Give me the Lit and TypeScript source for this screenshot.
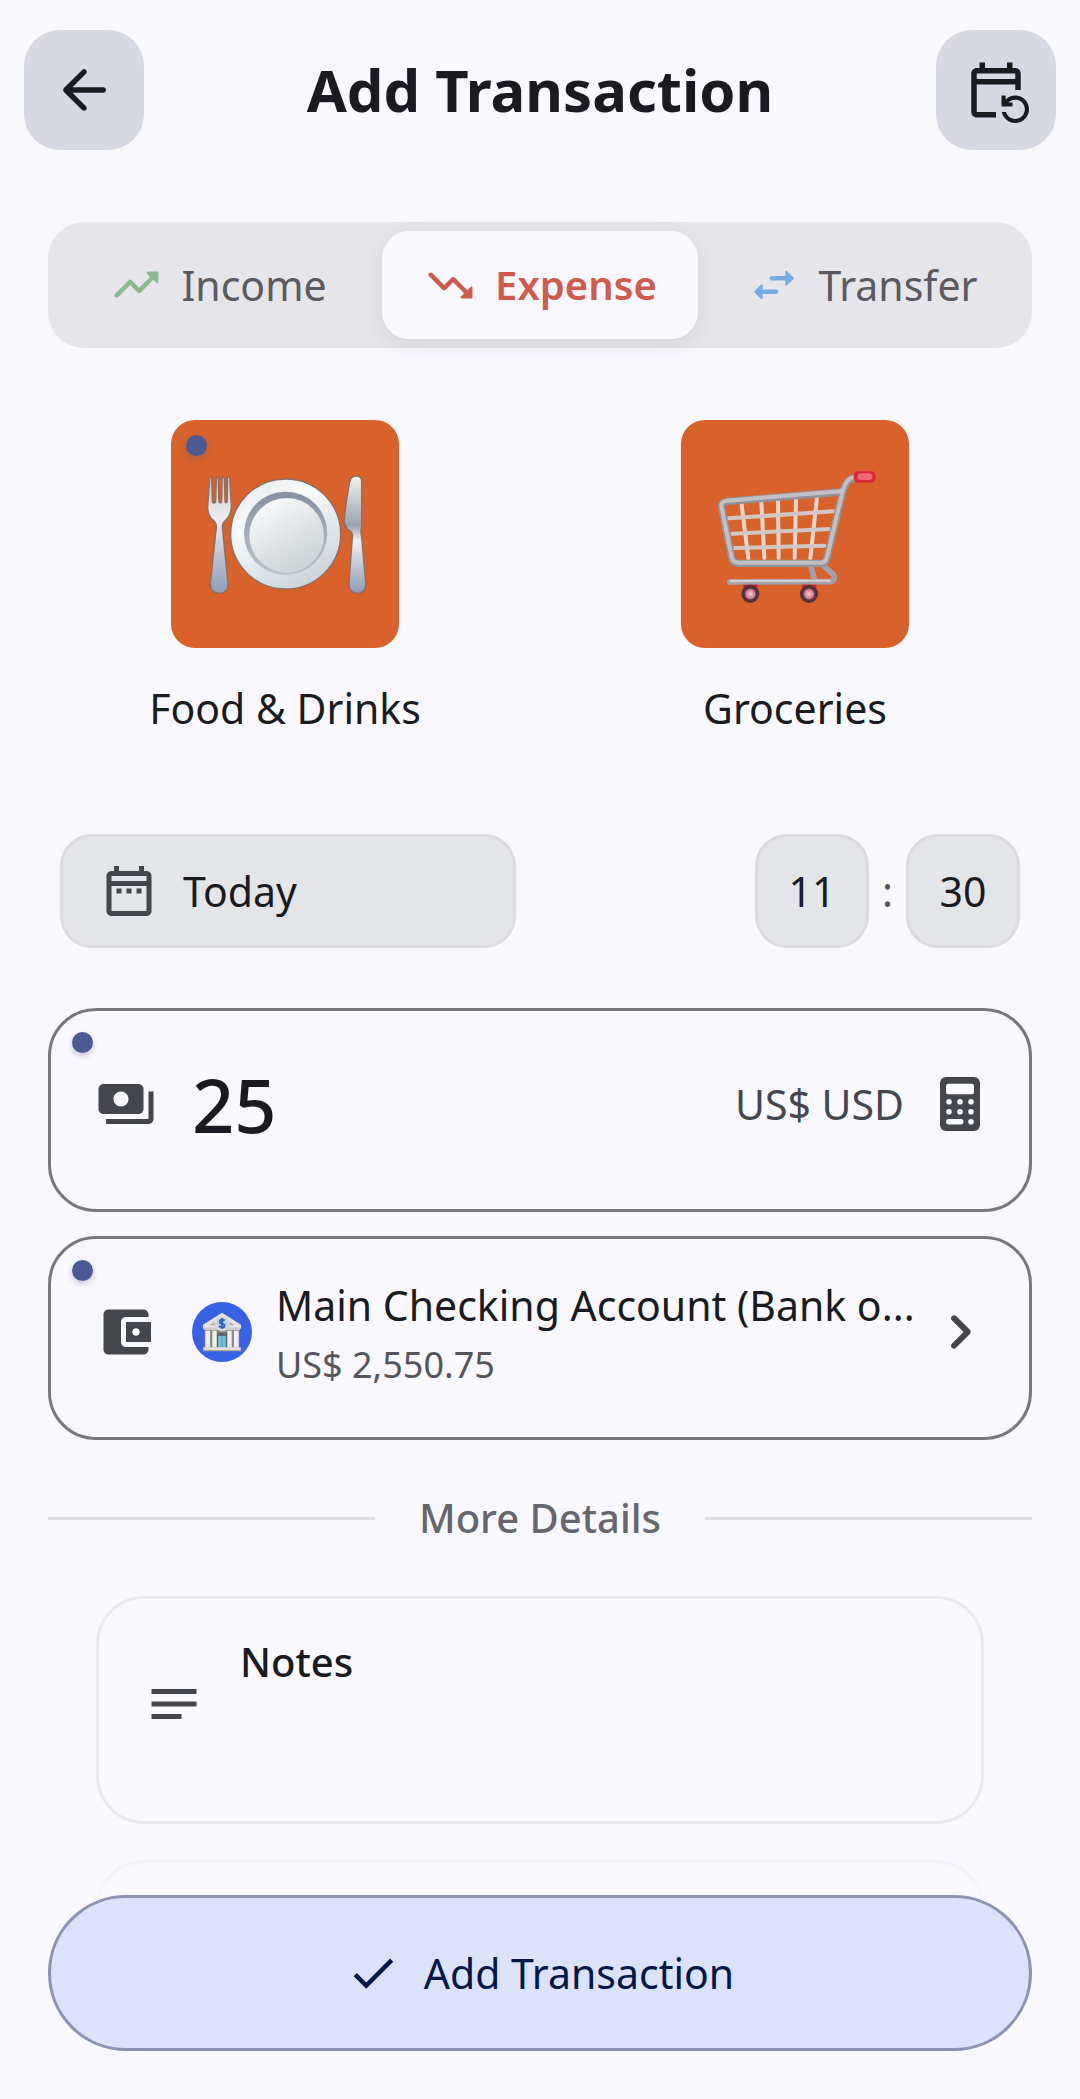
import { css, html, LitElement, svg, type TemplateResult } from 'lit'
import { customElement, property, state } from 'lit/decorators.js'
import { classMap } from 'lit/directives/class-map.js'

type TransactionKind = 'income' | 'expense' | 'transfer'

interface KindTab {
  kind: TransactionKind
  label: string
  icon: string
}

interface Category {
  id: string
  label: string
  art: () => TemplateResult
}

const ICONS: Record<string, TemplateResult> = {
  back: svg`<path d="M19 11H7.83l4.88-4.88c.39-.39.39-1.03 0-1.42-.39-.39-1.02-.39-1.41 0l-6.59 6.59c-.39.39-.39 1.02 0 1.41l6.59 6.59c.39.39 1.02.39 1.41 0 .39-.39.39-1.02 0-1.41L7.83 13H19c.55 0 1-.45 1-1s-.45-1-1-1z"/>`,
  repeat: svg`<path d="M21 12V6c0-1.1-.9-2-2-2h-1V2h-2v2H8V2H6v2H5c-1.1 0-2 .9-2 2v14c0 1.1.9 2 2 2h7v-2H5V10h14v2h2zM19 8H5V6h14v2zM15.64 20c.43 1.45 1.77 2.5 3.36 2.5 1.93 0 3.5-1.57 3.5-3.5s-1.57-3.5-3.5-3.5c-.95 0-1.82.38-2.45 1H18V18h-4v-4h1.5v1.43C16.4 14.55 17.64 14 19 14c2.76 0 5 2.24 5 5s-2.24 5-5 5c-2.42 0-4.44-1.72-4.9-4h1.54z"/>`,
  income: svg`<path d="M16.85 6.85l1.44 1.44-4.88 4.88-3.29-3.29c-.39-.39-1.02-.39-1.41 0l-6 6.01c-.39.39-.39 1.02 0 1.41.39.39 1.02.39 1.41 0L9.41 12l3.29 3.29c.39.39 1.02.39 1.41 0l5.59-5.58 1.44 1.44c.31.31.85.09.85-.35V6.5c.01-.28-.21-.5-.49-.5h-4.29c-.45 0-.67.54-.36.85z"/>`,
  expense: svg`<path transform="matrix(1 0 0 -1 0 24)" d="M16.85 6.85l1.44 1.44-4.88 4.88-3.29-3.29c-.39-.39-1.02-.39-1.41 0l-6 6.01c-.39.39-.39 1.02 0 1.41.39.39 1.02.39 1.41 0L9.41 12l3.29 3.29c.39.39 1.02.39 1.41 0l5.59-5.58 1.44 1.44c.31.31.85.09.85-.35V6.5c.01-.28-.21-.5-.49-.5h-4.29c-.45 0-.67.54-.36.85z"/>`,
  transfer: svg`<path d="M6.14 11.86l-2.78 2.79c-.19.2-.19.51 0 .71l2.78 2.79c.31.32.85.09.85-.35V16H13c.55 0 1-.45 1-1s-.45-1-1-1H7v-1.79c0-.45-.54-.67-.86-.35zm14.51-3.21l-2.78-2.79c-.31-.32-.85-.09-.85.35V8H11c-.55 0-1 .45-1 1s.45 1 1 1h6v1.79c0 .45.54.67.85.35l2.78-2.79c.2-.19.2-.51.02-.7z"/>`,
  calendar: svg`<path d="M7 11h2v2H7v-2zm14-5v14c0 1.1-.9 2-2 2H5c-1.11 0-2-.9-2-2V6c0-1.1.89-2 2-2h1V2h2v2h8V2h2v2h1c1.1 0 2 .9 2 2zM5 8h14V6H5v2zm14 12V10H5v10h14zm-4-7h2v-2h-2v2zm-4 0h2v-2h-2v2z"/>`,
  cash: svg`<path d="M19 14V6c0-1.1-.9-2-2-2H3c-1.1 0-2 .9-2 2v8c0 1.1.9 2 2 2h14c1.1 0 2-.9 2-2zm-9-1c-1.66 0-3-1.34-3-3s1.34-3 3-3 3 1.34 3 3-1.34 3-3 3zm13-6v11c0 1.1-.9 2-2 2H4v-2h17V7h2z"/>`,
  wallet: svg`<path d="M21 18v1c0 1.1-.9 2-2 2H5c-1.11 0-2-.9-2-2V5c0-1.1.89-2 2-2h14c1.1 0 2 .9 2 2v1h-9c-1.11 0-2 .9-2 2v8c0 1.1.89 2 2 2h9zm-9-2h10V8H12v8zm4-2.5c-.83 0-1.5-.67-1.5-1.5s.67-1.5 1.5-1.5 1.5.67 1.5 1.5-.67 1.5-1.5 1.5z"/>`,
  chevron: svg`<path d="M9.29 6.71c-.39.39-.39 1.02 0 1.41L13.17 12l-3.88 3.88c-.39.39-.39 1.02 0 1.41.39.39 1.02.39 1.41 0l4.59-4.59c.39-.39.39-1.02 0-1.41L10.7 6.7c-.38-.38-1.02-.38-1.41.01z"/>`,
  notes: svg`<path d="M3 18h12v-2H3v2zM3 6v2h18V6H3zm0 7h18v-2H3v2z"/>`,
  check: svg`<path d="M9 16.17L4.83 12l-1.42 1.41L9 19 21 7l-1.41-1.41z"/>`,
}

const calculatorIcon = html`
  <svg viewBox="0 0 72 72" aria-hidden="true">
    <rect x="16" y="9" width="40" height="54" rx="6" fill="currentColor" />
    <g fill="#faf8ff">
      <rect x="22" y="15.7" width="28" height="10.6" rx="2.5" />
      <circle cx="25" cy="33.7" r="2.8" />
      <circle cx="36" cy="33.7" r="2.8" />
      <circle cx="47" cy="33.7" r="2.8" />
      <circle cx="25" cy="43.7" r="2.8" />
      <circle cx="36" cy="43.7" r="2.8" />
      <circle cx="47" cy="43.7" r="2.8" />
      <rect x="22" y="51" width="17.5" height="5.4" rx="2.7" />
      <circle cx="47" cy="53.7" r="2.8" />
    </g>
  </svg>
`

const plateArt = () => html`
  <svg viewBox="0 0 684 684" aria-hidden="true">
    <defs>
      <linearGradient id="rim" x1="0" y1="0" x2="0.6" y2="1">
        <stop offset="0" stop-color="#e3e8ea" />
        <stop offset="0.4" stop-color="#f6fafb" />
        <stop offset="1" stop-color="#ccd6dc" />
      </linearGradient>
      <linearGradient id="well" x1="0" y1="0" x2="0" y2="1">
        <stop offset="0" stop-color="#858fa4" />
        <stop offset="0.5" stop-color="#a5adb9" />
        <stop offset="1" stop-color="#bcc4ca" />
      </linearGradient>
      <linearGradient id="face" x1="0.2" y1="0" x2="0.8" y2="1">
        <stop offset="0" stop-color="#fbfdfd" />
        <stop offset="0.6" stop-color="#dadfe1" />
        <stop offset="1" stop-color="#cbd1d5" />
      </linearGradient>
      <linearGradient id="steel" x1="0" y1="0" x2="0" y2="1">
        <stop offset="0" stop-color="#c3c4c9" />
        <stop offset="0.35" stop-color="#eceef0" />
        <stop offset="0.6" stop-color="#c9ced7" />
        <stop offset="1" stop-color="#8e9bb6" />
      </linearGradient>
      <linearGradient id="blade" x1="0" y1="0" x2="0" y2="1">
        <stop offset="0" stop-color="#f1f2f3" />
        <stop offset="0.42" stop-color="#9aa2b0" />
        <stop offset="0.55" stop-color="#eef0f2" />
        <stop offset="1" stop-color="#8e9bb6" />
      </linearGradient>
    </defs>
    <g stroke="#8a6f68" stroke-width="4" stroke-linejoin="round">
      <path
        fill="url(#steel)"
        d="M116 174Q119 168 122 174L124 246Q130 252 134 246L136 174Q139 168 142 174L144 246Q148 252 152 246L153 174Q156 168 160 174L162 246Q166 252 169 244L169 174Q173 168 176 174L181 262Q179 288 162 302Q154 308 154 322L171 492Q171 520 145 520Q118 520 118 492L136 322Q136 308 128 302Q111 290 110 262Z"
      />
      <path
        fill="url(#blade)"
        d="M556 168Q572 168 572 184V318Q568 334 572 352L584 492Q584 520 559 520Q534 520 534 492L544 352Q546 338 536 332Q518 320 520 296Q526 240 536 186Q540 168 556 168Z"
      />
      <circle cx="344" cy="342" r="165" fill="url(#rim)" />
    </g>
    <circle cx="344" cy="340" r="125" fill="url(#well)" />
    <circle cx="347" cy="346" r="112" fill="url(#face)" />
  </svg>
`

const cartArt = () => html`
  <svg viewBox="0 0 684 684" aria-hidden="true">
    <defs>
      <radialGradient id="wheel">
        <stop offset="0" stop-color="#f6c4d2" />
        <stop offset="0.5" stop-color="#cf7d95" />
        <stop offset="0.65" stop-color="#5c3440" />
        <stop offset="1" stop-color="#4a2f37" />
      </radialGradient>
    </defs>
    <g fill="none" stroke-linecap="round" stroke-linejoin="round">
      <g stroke="#ead6cd" stroke-width="12">
        <path d="M182 254L202 414M241 246L250 414M291 242L293 414M345 238L341 414M408 232L388 414" />
        <path stroke="#d5c6c6" d="M144 295L458 274M154 341L444 327M162 384L430 377" />
      </g>
      <path stroke="#a2a0a8" stroke-width="17" d="M390 440L400 476M430 440L458 464Q464 484 446 485L146 486" />
      <path stroke="#d2ced1" stroke-width="7" d="M150 483L446 482" />
      <path
        stroke="#949299"
        stroke-width="22"
        d="M518 174Q498 176 486 212L438 414Q434 430 420 430L172 430Q156 430 152 414L122 264Q118 246 138 244L478 216"
      />
      <path
        stroke="#c2c0c4"
        stroke-width="12"
        d="M518 172Q498 174 486 210L438 412Q434 428 420 428L172 428Q156 428 152 412L122 262Q118 244 138 242L478 214"
      />
    </g>
    <rect x="518" y="154" width="66" height="34" rx="13" fill="#d9293d" />
    <rect x="530" y="160" width="44" height="20" rx="9" fill="#ee6a74" />
    <path d="M187 494H229V512H187zM364 494H406V512H364z" fill="#c4213f" />
    <circle cx="208" cy="522" r="27" fill="url(#wheel)" />
    <circle cx="384" cy="522" r="27" fill="url(#wheel)" />
  </svg>
`

const bankArt = html`
  <svg viewBox="0 0 180 180" aria-hidden="true">
    <circle cx="90" cy="90" r="90" fill="#3862e4" />
    <path d="M38 82H142V138H38z" fill="#8f8b86" />
    <path d="M90 32L147 68Q149 78 144 82H36Q31 78 33 68z" fill="#e9e7e6" />
    <path d="M90 44L128 70H52z" fill="#b3aeab" />
    <path d="M36 76H144V84H36z" fill="#cfcbc8" />
    <circle cx="90" cy="65" r="23" fill="#dad8d8" />
    <circle cx="90" cy="64" r="17" fill="#c2d3e8" />
    <path
      d="M98 56Q90 50 84 56Q81 63 90 65Q100 67 97 74Q90 80 81 73M90 48V81"
      fill="none"
      stroke="#2c6cb8"
      stroke-width="6"
    />
    <path d="M74 92H106V138H74z" fill="#5d6970" />
    <path d="M79 102H101V138H79z" fill="#6cc4de" />
    <path d="M89 102H91V138H89z" fill="#4b8ca5" />
    <path
      d="M40 86H54V136H40zM61 86H74V136H61zM106 86H119V136H106zM126 86H140V136H126z"
      fill="#f1efee"
    />
    <path d="M34 136H146V147H34z" fill="#e4e0dd" />
    <path d="M34 144H146V148H34z" fill="#aaa39d" />
  </svg>
`

const TABS: KindTab[] = [
  { kind: 'income', label: 'Income', icon: 'income' },
  { kind: 'expense', label: 'Expense', icon: 'expense' },
  { kind: 'transfer', label: 'Transfer', icon: 'transfer' },
]

const CATEGORIES: Category[] = [
  { id: 'food', label: 'Food & Drinks', art: plateArt },
  { id: 'groceries', label: 'Groceries', art: cartArt },
]

@customElement('tx-icon')
export class TxIcon extends LitElement {
  static styles = css`
    :host {
      display: block;
      flex: none;
      width: 60px;
      height: 60px;
    }

    svg {
      display: block;
      width: 100%;
      height: 100%;
      fill: currentColor;
    }
  `

  @property({ type: String })
  name = ''

  protected render() {
    return html`<svg viewBox="0 0 24 24" aria-hidden="true">${ICONS[this.name]}</svg>`
  }
}

@customElement('app-root')
export class AppRoot extends LitElement {
  static styles = css`
    :host {
      display: block;
      position: relative;
      height: 100vh;
      overflow: hidden;
      background: #faf8ff;
      color: #1a1b20;
      font-family: 'Noto Sans', 'Open Sans', sans-serif;
      font-size: 41px;
      line-height: 60px;
    }

    * {
      box-sizing: border-box;
    }

    button,
    input,
    textarea {
      margin: 0;
      padding: 0;
      border: 0;
      background: none;
      color: inherit;
      font: inherit;
      text-align: inherit;
    }

    button {
      cursor: pointer;
    }

    header {
      display: flex;
      align-items: center;
      justify-content: space-between;
      padding: 30px 24px 0;
    }

    h1 {
      margin: 0;
      font-size: 58px;
      line-height: 84px;
      font-weight: 700;
    }

    .square {
      display: flex;
      align-items: center;
      justify-content: center;
      width: 120px;
      height: 120px;
      border-radius: 36px;
      background: #d6d9e3;
    }

    .square tx-icon {
      width: 66px;
      height: 66px;
    }

    .tabs {
      display: grid;
      grid-template-columns: repeat(3, 1fr);
      margin: 72px 48px 0;
      padding: 9px;
      border-radius: 36px;
      background: #e6e6ea;
    }

    .tab {
      display: flex;
      align-items: center;
      justify-content: center;
      gap: 18px;
      height: 108px;
      margin: 0 3px;
      border-radius: 27px;
      color: #5a5a60;
    }

    .tab tx-icon {
      width: 54px;
      height: 54px;
    }

    .tab .income {
      color: #8bba8d;
    }

    .tab .transfer {
      color: #77abe4;
    }

    .tab.active {
      background: #faf8ff;
      box-shadow: 0 6px 24px rgba(0, 0, 0, 0.08);
      color: #cf5b4d;
      font-size: 40px;
      font-weight: 600;
    }

    .categories {
      display: grid;
      grid-template-columns: 1fr 1fr;
      margin: 72px 30px 0;
    }

    .category {
      display: flex;
      flex-direction: column;
      align-items: center;
      gap: 30px;
      text-align: center;
    }

    .tile {
      position: relative;
      width: 228px;
      height: 228px;
      border-radius: 24px;
      background: #d86229;
    }

    .tile svg {
      display: block;
      width: 100%;
      height: 100%;
    }

    .dot {
      position: absolute;
      top: 21px;
      left: 21px;
      width: 21px;
      height: 21px;
      border-radius: 50%;
      background: #4b5b92;
      box-shadow: 0 3px 6px rgba(75, 91, 146, 0.3);
    }

    .tile .dot {
      top: 15px;
      left: 15px;
    }

    .when {
      display: flex;
      justify-content: space-between;
      margin: 96px 60px 0;
    }

    .pill {
      display: flex;
      align-items: center;
      justify-content: center;
      width: 114px;
      height: 114px;
      border: 3px solid #dcdce0;
      border-radius: 32px;
      background: #e4e5e9;
    }

    .date {
      justify-content: flex-start;
      gap: 24px;
      width: 47.5%;
      padding: 0 36px;
    }

    .date tx-icon,
    .card tx-icon,
    .detail tx-icon {
      color: #44464e;
    }

    .time {
      display: flex;
      align-items: center;
    }

    .colon {
      width: 37px;
      color: #53545a;
      text-align: center;
    }

    .card {
      position: relative;
      display: flex;
      align-items: center;
      gap: 36px;
      height: 204px;
      margin: 24px 48px 0;
      padding: 0 33px 12px 45px;
      border: 3px solid #77777e;
      border-radius: 48px;
    }

    button.card {
      width: calc(100% - 96px);
    }

    .when + .card {
      margin-top: 60px;
    }

    .amount {
      flex: 1;
      min-width: 0;
      height: 96px;
      font-size: 74px;
      font-weight: 500;
      outline: none;
    }

    .currency {
      color: #44464e;
    }

    .calculator {
      width: 72px;
      height: 72px;
      margin-left: -16px;
      color: #44464e;
    }

    .calculator svg,
    .bank svg {
      display: block;
      width: 100%;
      height: 100%;
    }

    .account {
      display: flex;
      align-items: center;
      flex: 1;
      gap: 24px;
      min-width: 0;
    }

    .bank {
      flex: none;
      width: 60px;
      height: 60px;
    }

    .account-text {
      display: flex;
      flex-direction: column;
      padding-top: 6px;
      white-space: nowrap;
    }

    .balance {
      color: #55565c;
      font-size: 36px;
    }

    .card .chevron {
      width: 72px;
      height: 72px;
      margin-left: -36px;
    }

    .divider {
      display: flex;
      align-items: center;
      gap: 44px;
      margin: 48px 48px 0;
      color: #66676c;
      font-size: 40px;
      font-weight: 500;
    }

    .divider::before,
    .divider::after {
      content: '';
      flex: 1;
      height: 3px;
      background: #dfdee3;
    }

    .detail {
      display: flex;
      align-items: center;
      gap: 36px;
      height: 228px;
      margin: 36px 96px 0;
      padding: 0 45px 12px;
      border: 3px solid #ebe9ef;
      border-radius: 48px;
    }

    .divider + .detail {
      margin-top: 48px;
    }

    .field {
      display: flex;
      flex-direction: column;
      flex: 1;
    }

    .field label {
      font-size: 40px;
      font-weight: 500;
    }

    .field textarea {
      height: 84px;
      resize: none;
      outline: none;
    }

    footer {
      position: absolute;
      right: 0;
      bottom: 0;
      left: 0;
      padding: 72px 48px 48px;
      background: linear-gradient(rgba(250, 248, 255, 0), #faf8ff 84px);
    }

    .submit {
      display: flex;
      align-items: center;
      justify-content: center;
      gap: 24px;
      width: 100%;
      height: 156px;
      border: 3px solid #8a93b2;
      border-radius: 78px;
      background: #dae2fc;
      color: #05164b;
    }

    .submit tx-icon {
      width: 54px;
      height: 54px;
    }
  `

  @state()
  private kind: TransactionKind = 'expense'

  @state()
  private category = 'food'

  private renderTab(tab: KindTab) {
    const active = tab.kind === this.kind
    return html`
      <button
        class=${classMap({ tab: true, active })}
        role="tab"
        aria-selected=${active}
        @click=${() => (this.kind = tab.kind)}
      >
        <tx-icon class=${tab.kind} name=${tab.icon}></tx-icon>
        <span>${tab.label}</span>
      </button>
    `
  }

  private renderCategory(category: Category) {
    return html`
      <button class="category" @click=${() => (this.category = category.id)}>
        <span class="tile">
          ${category.art()}
          ${category.id === this.category ? html`<span class="dot"></span>` : null}
        </span>
        <span>${category.label}</span>
      </button>
    `
  }

  protected render() {
    return html`
      <header>
        <button class="square" aria-label="Back"><tx-icon name="back"></tx-icon></button>
        <h1>Add Transaction</h1>
        <button class="square" aria-label="Recurring"><tx-icon name="repeat"></tx-icon></button>
      </header>

      <main>
        <div class="tabs" role="tablist">${TABS.map((tab) => this.renderTab(tab))}</div>

        <div class="categories">${CATEGORIES.map((item) => this.renderCategory(item))}</div>

        <div class="when">
          <button class="pill date">
            <tx-icon name="calendar"></tx-icon>
            <span>Today</span>
          </button>
          <div class="time">
            <button class="pill" aria-label="Hour">11</button>
            <span class="colon">:</span>
            <button class="pill" aria-label="Minute">30</button>
          </div>
        </div>

        <div class="card">
          <span class="dot"></span>
          <tx-icon name="cash"></tx-icon>
          <input class="amount" aria-label="Amount" inputmode="decimal" value="25" />
          <button class="currency">US$ USD</button>
          <button class="calculator" aria-label="Calculator">${calculatorIcon}</button>
        </div>

        <button class="card">
          <span class="dot"></span>
          <tx-icon name="wallet"></tx-icon>
          <span class="account">
            <span class="bank">${bankArt}</span>
            <span class="account-text">
              <span>Main Checking Account (Bank o...</span>
              <span class="balance">US$ 2,550.75</span>
            </span>
          </span>
          <tx-icon class="chevron" name="chevron"></tx-icon>
        </button>

        <div class="divider">More Details</div>

        <div class="detail">
          <tx-icon name="notes"></tx-icon>
          <div class="field">
            <label for="notes">Notes</label>
            <textarea id="notes"></textarea>
          </div>
        </div>
        <div class="detail"></div>
      </main>

      <footer>
        <button class="submit">
          <tx-icon name="check"></tx-icon>
          <span>Add Transaction</span>
        </button>
      </footer>
    `
  }
}

declare global {
  interface HTMLElementTagNameMap {
    'tx-icon': TxIcon
    'app-root': AppRoot
  }
}
